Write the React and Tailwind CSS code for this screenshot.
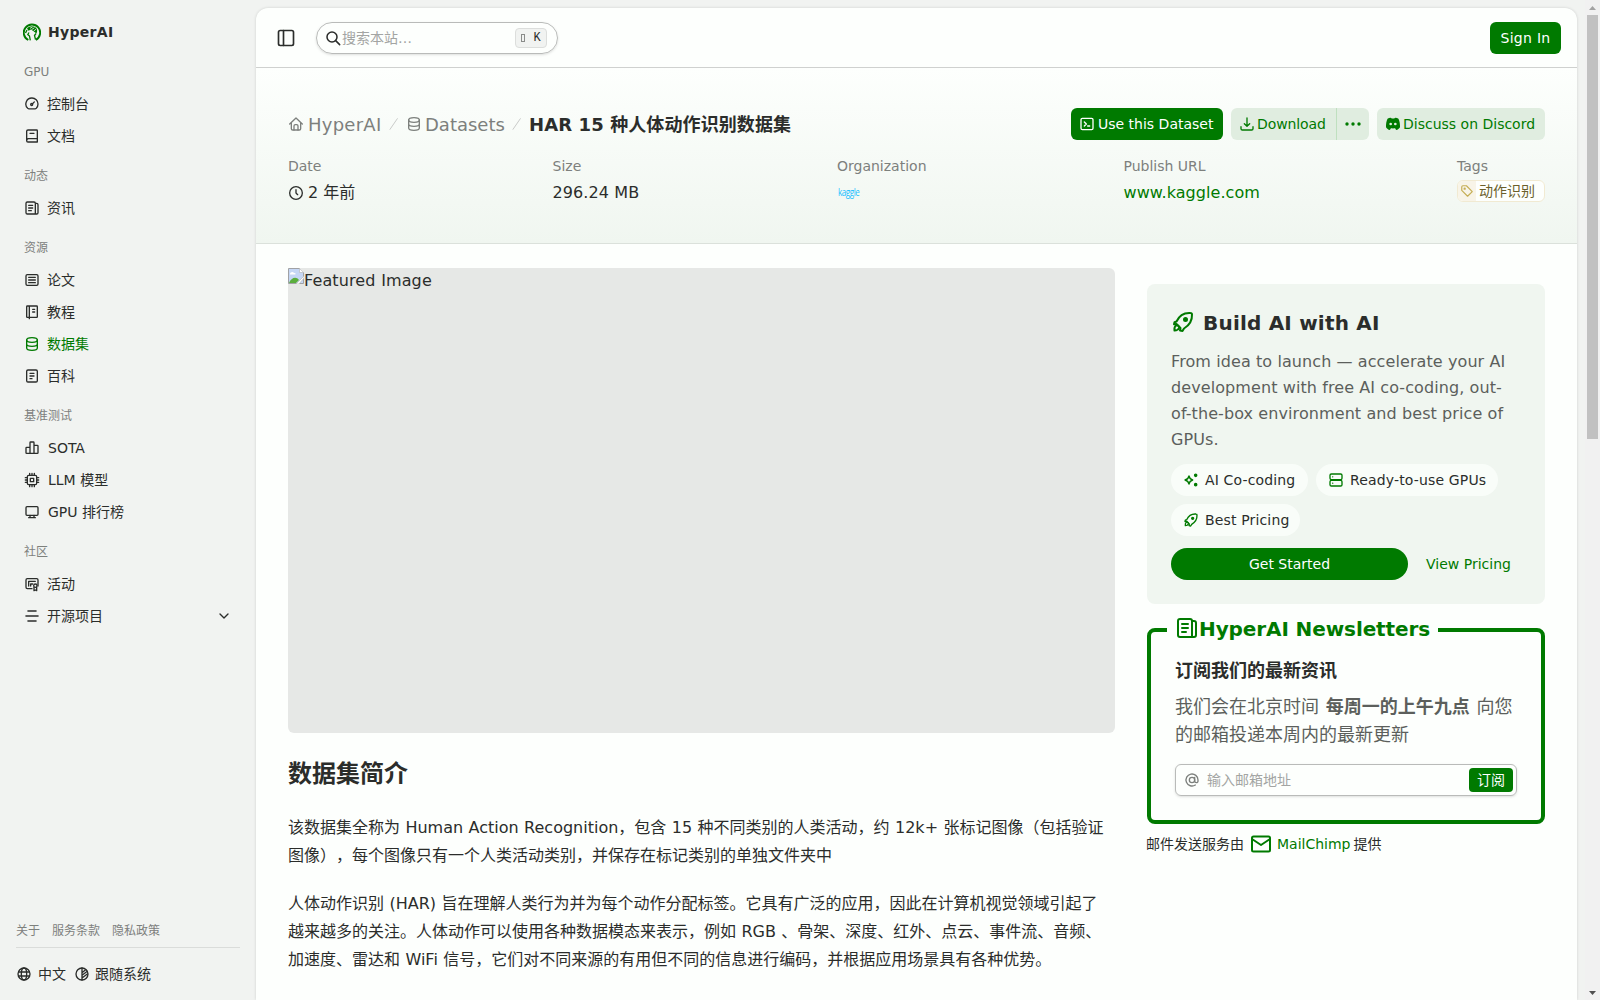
import React from "react";
import clsx from "clsx";

const Icon = ({ className = "size-4", strokeWidth = 2, children }) => (
  <svg
    viewBox="0 0 24 24"
    fill="none"
    stroke="currentColor"
    strokeWidth={strokeWidth}
    strokeLinecap="round"
    strokeLinejoin="round"
    className={clsx("shrink-0", className)}
  >
    {children}
  </svg>
);

const DashboardIcon = () => (
  <Icon>
    <path d="M12 3a9 9 0 0 1 9 9c0 2.6-1 4.900-2.600 6.500-.6.5-1 .8-1.700.8H7.300c-.7 0-1.100-.3-1.700-.8A9 9 0 0 1 12 3Z" />
    <circle cx="11.500" cy="12.800" r="1.500" />
    <path d="m12.800 11.500 2.700-2.700" />
  </Icon>
);

const BookIcon = () => (
  <Icon>
    <path d="M4 19V5a2 2 0 0 1 2-2h13a1 1 0 0 1 1 1v17H6a2 2 0 0 1-2-2Zm0 0a3 3 0 0 1 2.500-3H20M9 8h6" />
  </Icon>
);

const NewsIcon = ({ className }) => (
  <Icon className={className}>
    <path d="M17 21H5a2 2 0 0 1-2-2V5a2 2 0 0 1 2-2h10a2 2 0 0 1 2 2v16Zm0 0h2a2 2 0 0 0 2-2V7a2 2 0 0 0-2-2h-2M7 8h6M7 12h6M7 16h4" />
  </Icon>
);

const PaperIcon = () => (
  <Icon>
    <rect x="3" y="4" width="18" height="16" rx="2" />
    <path d="M7 8h10M7 12h10M7 16h10" />
  </Icon>
);

const NotebookIcon = () => (
  <Icon>
    <path d="M8 3v19M5 3h14a1 1 0 0 1 1 1v15a1 1 0 0 1-1 1H5a1 1 0 0 1-1-1V4a1 1 0 0 1 1-1ZM13 8h3M13 12h3" />
  </Icon>
);

const DatabaseIcon = () => (
  <Icon>
    <ellipse cx="12" cy="6" rx="8" ry="3.500" />
    <path d="M4 6v12c0 1.900 3.600 3.500 8 3.500s8-1.600 8-3.500V6M4 12c0 1.900 3.600 3.500 8 3.500s8-1.600 8-3.500" />
  </Icon>
);

const DocIcon = () => (
  <Icon>
    <rect x="4" y="3" width="16" height="18" rx="2" />
    <path d="M9 8h6M9 12h6M9 16h3" />
  </Icon>
);

const ChartIcon = () => (
  <Icon>
    <path d="M9 20V4a1 1 0 0 1 1-1h4a1 1 0 0 1 1 1v16M9 11H4a1 1 0 0 0-1 1v7a1 1 0 0 0 1 1h16a1 1 0 0 0 1-1V9a1 1 0 0 0-1-1h-5" />
  </Icon>
);

const ChipIcon = () => (
  <Icon>
    <rect x="5" y="5" width="14" height="14" rx="2" />
    <rect x="9.500" y="9.500" width="5" height="5" />
    <path d="M8.500 2v3M12 2v3M15.500 2v3M8.500 19v3M12 19v3M15.500 19v3M2 8.500h3M2 12h3M2 15.500h3M19 8.500h3M19 12h3M19 15.500h3" />
  </Icon>
);

const MonitorIcon = () => (
  <Icon>
    <rect x="3" y="4" width="18" height="13" rx="1.500" />
    <path d="M9 17v3.500M15 17v3.500M7 20.500h10" />
  </Icon>
);

const EventIcon = () => (
  <Icon>
    <path d="M12 19H5a2 2 0 0 1-2-2V6a2 2 0 0 1 2-2h14a2 2 0 0 1 2 2v9M7 15V8h10M10 15v-3h3" />
    <circle cx="17" cy="14.500" r="2.500" />
    <path d="M15 17v5l2-1 2 1v-5" />
  </Icon>
);

const ProjectIcon = () => (
  <Icon strokeWidth={2.4}>
    <path d="M6 4.500h12M3 12h18M6 19.500h12" />
  </Icon>
);

const RocketIcon = ({ className }) => (
  <Icon className={className}>
    <path d="M5.500 11.500C8 6 12.500 2.500 19.500 3c1 0 1.500.5 1.500 1.500.3 6.500-3 11-8 14L11.500 21l-2.500-.5.5-2.500-4-4-2.500.2.500-2 2-.7Z" />
    <path d="M3.500 20.500c-.3-2 .2-4 1.500-5 1.500-.8 3.500.8 3 2.500-.6 1.600-2.500 2.500-4.500 2.500Z" />
    <circle cx="14.500" cy="9.500" r="1.500" fill="currentColor" />
  </Icon>
);

const groups = [
  { title: "GPU", items: [["控制台", DashboardIcon], ["文档", BookIcon]] },
  { title: "动态", items: [["资讯", NewsIcon]] },
  {
    title: "资源",
    items: [
      ["论文", PaperIcon],
      ["教程", NotebookIcon],
      ["数据集", DatabaseIcon],
      ["百科", DocIcon],
    ],
  },
  {
    title: "基准测试",
    items: [
      ["SOTA", ChartIcon],
      ["LLM 模型", ChipIcon],
      ["GPU 排行榜", MonitorIcon],
    ],
  },
  { title: "社区", items: [["活动", EventIcon], ["开源项目", ProjectIcon]] },
];

const Sidebar = () => (
  <aside className="flex h-full w-64 shrink-0 flex-col">
    <div className="mt-2 flex h-12 items-center gap-[7px] pl-[23px]">
      <svg viewBox="0 0 18 18" className="size-[18px]" fill="none">
        <path
          d="M5.300 17A8.200 8.200 0 1 1 12.800 16.900"
          stroke="#007a00"
          strokeWidth="1.900"
        />
        <path
          d="M4 5.500C6 3 9.500 2.600 12 4c2.200 1.300 2.800 4 1.500 6.500L11.500 9 8 6.500 5.500 7.800Z"
          fill="#007a00"
        />
        <path
          d="M7 5.300 9.500 4M8.500 6.700l3-2M10.500 8.200l2.500-2"
          stroke="#f1f3f1"
          strokeWidth=".8"
        />
        <path
          d="M4 7 2.500 10M6 9.500 4.800 11.500l1.700 1.500.8 4.300M13 10.500l-1.500 2 1 4"
          stroke="#007a00"
          strokeWidth="1.300"
        />
      </svg>
      <span className="text-sm font-bold tracking-[0.3px]">HyperAI</span>
    </div>

    <nav className="flex flex-col gap-2">
      {groups.map((group) => (
        <div key={group.title}>
          <div className="flex h-8 items-center pl-6 text-xs text-[#7d807d]">
            {group.title}
          </div>
          {group.items.map(([name, ItemIcon]) => (
            <a
              key={name}
              className={clsx(
                "flex h-8 items-center pl-6 pr-6 text-sm",
                /^[A-Z]/.test(name) ? "gap-2" : "gap-[7px]",
                name === "数据集" && "text-[#007a00]"
              )}
            >
              <ItemIcon />
              <span className="flex-1">{name}</span>
              {name === "开源项目" && (
                <Icon>
                  <path d="m6 9 6 6 6-6" />
                </Icon>
              )}
            </a>
          ))}
        </div>
      ))}
    </nav>

    <div className="mx-4 mt-auto">
      <div className="flex gap-3 pb-2 text-xs leading-4 text-[#7d807d]">
        <a>关于</a>
        <a>服务条款</a>
        <a>隐私政策</a>
      </div>
      <div className="flex h-[53px] items-center border-t border-[#dadcda] text-sm">
        <Icon>
          <circle cx="12" cy="12" r="9" />
          <ellipse cx="12" cy="12" rx="4" ry="9" />
          <path d="M4 9h16M4 15h16" />
        </Icon>
        <span className="ml-1.5">中文</span>
        <Icon className="ml-2 size-4">
          <circle cx="12" cy="12" r="9" />
          <path d="M12 3v18M12 10l5-4M12 14l8-6M12 18l8-6" />
        </Icon>
        <span className="ml-[5px]">跟随系统</span>
      </div>
    </div>
  </aside>
);

const TopBar = () => (
  <header className="flex h-[60px] shrink-0 items-center border-b border-[#cfd1cf] pl-5 pr-4">
    <Icon className="size-5">
      <rect x="3" y="3" width="18" height="18" rx="2" />
      <path d="M9 3v18" />
    </Icon>
    <div className="ml-5 flex h-8 w-[242px] items-center rounded-full border border-[#b9bbb9] pl-2 pr-2.5 shadow-sm">
      <Icon strokeWidth={2.3}>
        <circle cx="10.500" cy="10.500" r="7.500" />
        <path d="m16 16 6 6" />
      </Icon>
      <span className="ml-px flex-1 text-sm text-[#a3a5a3]">搜索本站…</span>
      <kbd className="flex h-5 w-8 items-center justify-center gap-2 rounded border border-[#dcdedc] bg-[#f1f3f1] font-['Liberation_Mono'] text-xs">
        <span className="h-2 w-1 border border-[#8a8c8a]"></span>K
      </kbd>
    </div>
    <button className="ml-auto h-8 w-[71px] rounded-md bg-[#007a00] text-sm tracking-[0.3px] text-white">
      Sign In
    </button>
  </header>
);

const Meta = ({ label, className, children }) => (
  <div className={className}>
    <div className="h-5 text-sm leading-5 text-[#7d807d]">{label}</div>
    <div className="mt-[5px] flex h-6 items-center whitespace-nowrap">
      {children}
    </div>
  </div>
);

const Hero = () => (
  <section className="h-44 shrink-0 border-b border-[#dbe1db] bg-linear-to-b from-[#fdfffd] to-[#f0f6f0] px-8 pt-10">
    <div className="flex h-8 items-center">
      <div className="flex items-center text-lg text-[#7d807d]">
        <Icon>
          <path d="M2.500 12 12 3l9.500 9M5 10v9a2 2 0 0 0 2 2h10a2 2 0 0 0 2-2v-9" />
          <path d="M9 21v-6a2 2 0 0 1 2-2h2a2 2 0 0 1 2 2v6" />
        </Icon>
        <span className="ml-1 w-[74px] pt-0.5 tracking-[0.25px]">HyperAI</span>
        <Icon className="ml-1 size-4 text-[#c9cbc9]" strokeWidth={1.5}>
          <path d="M17 4 6 20" />
        </Icon>
        <span className="ml-1 flex w-[103px] items-center gap-[3px]">
          <DatabaseIcon />
          <span className="pt-0.5">Datasets</span>
        </span>
        <Icon className="size-4 text-[#c9cbc9]" strokeWidth={1.5}>
          <path d="M17 4 6 20" />
        </Icon>
      </div>
      <h1 className="ml-1 whitespace-nowrap pt-0.5 text-lg font-bold tracking-[0.1px]">
        HAR 15 种人体动作识别数据集
      </h1>

      <div className="ml-auto flex gap-2 text-sm">
        <button className="flex h-8 w-[152px] items-center gap-[3px] whitespace-nowrap rounded-md bg-[#007a00] pl-2 text-white">
          <Icon>
            <rect x="3" y="3.500" width="18" height="17" rx="2" />
            <path d="m8 9 3 3-3 3M13 15h3" />
          </Icon>
          Use this Dataset
        </button>
        <div className="flex h-8 w-[138px] rounded-md bg-[#e0ede0] text-[#007a00]">
          <button className="flex w-[106px] items-center gap-0.5 border-r border-[#bfe0bf] pl-2 tracking-[-0.1px]">
            <Icon>
              <path d="M12 3v12M8 11.500l4 4 4-4M3 16v3a2 2 0 0 0 2 2h14a2 2 0 0 0 2-2v-3" />
            </Icon>
            Download
          </button>
          <button className="flex flex-1 items-center justify-center">
            <svg viewBox="0 0 16 4" className="w-4" fill="currentColor">
              <circle cx="2" cy="2" r="1.700" />
              <circle cx="8" cy="2" r="1.700" />
              <circle cx="14" cy="2" r="1.700" />
            </svg>
          </button>
        </div>
        <button className="flex h-8 w-[168px] items-center gap-0.5 whitespace-nowrap rounded-md bg-[#e0ede0] pl-2 text-[#007a00]">
          <svg viewBox="0 0 24 24" className="size-4" fill="currentColor">
            <path
              fillRule="evenodd"
              d="M8.500 2.500c.7 0 1.200.4 1.500 1.200a15 15 0 0 1 4 0c.3-.8.800-1.200 1.500-1.200 1.700.2 3.500.7 4.700 1.700 1.600 2.700 2.500 8.500 2.300 12.500-1.400 2-3.400 3.700-5.500 4.300-.8-.5-1.400-1.700-1.800-2.600-1.800.3-4.600.3-6.400 0-.4.900-1 2.100-1.800 2.600-2.100-.6-4.100-2.300-5.500-4.300-.2-4 .7-9.800 2.300-12.500 1.200-1 3-1.500 4.700-1.700ZM8.500 10a2 2 0 1 0 0 4 2 2 0 0 0 0-4Zm7 0a2 2 0 1 0 0 4 2 2 0 0 0 0-4Z"
            />
          </svg>
          Discuss on Discord
        </button>
      </div>
    </div>

    <div className="mt-4 flex justify-between">
      <Meta label="Date" className="w-[68px]">
        <Icon className="mr-1 size-4">
          <circle cx="12" cy="12" r="9.500" />
          <path d="M12 7v5l2.500 2.500" />
        </Icon>
        2 年前
      </Meta>
      <Meta label="Size" className="w-[88px]">
        <span className="tracking-[0.1px]">296.24 MB</span>
      </Meta>
      <Meta label="Organization" className="w-[90px]">
        <span className="-mt-0.5 scale-y-125 pl-px font-['Open_Sans'] text-[8px] tracking-[-0.4px] text-[#20beff]">
          kaggle
        </span>
      </Meta>
      <Meta label="Publish URL" className="w-[137px]">
        <a className="tracking-[0.07px] text-[#007a00]">www.kaggle.com</a>
      </Meta>
      <Meta label="Tags" className="w-[88px]">
        <span className="-mt-1 flex h-[22px] w-[88px] overflow-hidden rounded-md border border-[#f1ead2] bg-[#fdfffd] text-sm leading-5 text-[#6b5f2b]">
          <span className="flex w-[18px] items-center justify-center bg-[#f8f4e8] text-[#c5ae55]">
            <Icon className="size-3.5">
              <path d="M3 5v6l10 10 8-8L11 3H5a2 2 0 0 0-2 2Z" />
              <circle cx="8" cy="8" r="1" />
            </Icon>
          </span>
          <span className="ml-[3px]">动作识别</span>
        </span>
      </Meta>
    </div>
  </section>
);

const Article = () => (
  <article className="w-[827px] [text-spacing-trim:space-all] [word-spacing:0.35px]">
    <div className="flex h-[465px] items-start rounded-md bg-[#e6e8e6]">
      <svg viewBox="0 0 16 16" className="size-4 shrink-0">
        <path d="M.5.500h11l4 4v11H.5Z" fill="#c5d7f5" stroke="#a0a2a5" />
        <path d="M2 6c0-2 3-3 4-1 2-.5 2 1.500 1 1.500H2Z" fill="#fff" />
        <path d="M1 15c2-5 7-7 10-3l-3 3Z" fill="#5aae3c" />
        <path d="M11.500.500v4h4M8 16l8-8v2l-5 6Z" fill="#fff" stroke="#b8babc" strokeWidth=".7" />
      </svg>
      <span className="pt-px leading-6 tracking-[0.12px]">Featured Image</span>
    </div>
    <h2 className="mt-[25px] text-2xl font-bold">数据集简介</h2>
    <p className="mt-6 whitespace-nowrap leading-7">
      该数据集全称为 Human Action Recognition，包含 15 种不同类别的人类活动，约 12k+ 张标记图像（包括验证
      <br />
      图像），每个图像只有一个人类活动类别，并保存在标记类别的单独文件夹中
    </p>
    <p className="mt-5 whitespace-nowrap leading-7">
      人体动作识别 (HAR) 旨在理解人类行为并为每个动作分配标签。它具有广泛的应用，因此在计算机视觉领域引起了
      <br />
      越来越多的关注。人体动作可以使用各种数据模态来表示，例如 RGB 、骨架、深度、红外、点云、事件流、音频、
      <br />
      加速度、雷达和 WiFi 信号，它们对不同来源的有用但不同的信息进行编码，并根据应用场景具有各种优势。
    </p>
  </article>
);

const Feature = ({ className, children }) => (
  <span
    className={clsx(
      "flex h-8 items-center gap-1.5 whitespace-nowrap rounded-full bg-[#f9fdf9] pl-3 text-sm tracking-[0.15px]",
      className
    )}
  >
    {children}
  </span>
);

const BuildCard = () => (
  <div className="h-80 rounded-lg bg-[#f0f6f0] p-6 pt-[25px]">
    <h3 className="flex h-7 items-center gap-2 text-xl font-bold tracking-[0.2px]">
      <RocketIcon className="-mt-0.5 size-6 text-[#007a00]" />
      Build AI with AI
    </h3>
    <p className="mt-3 whitespace-nowrap leading-[26px] tracking-[0.09px] text-[#5c5f5c]">
      From idea to launch — accelerate your AI
      <br />
      development with free AI co-coding, out-
      <br />
      of-the-box environment and best price of
      <br />
      GPUs.
    </p>
    <div className="mt-[11px] flex flex-wrap gap-2">
      <Feature className="w-[137px]">
        <Icon className="size-4 text-[#007a00]">
          <path d="M9 6c.8 4 2 5 5.500 6-3.500 1-4.700 2-5.500 6-.8-4-2-5-6-6 4-1 5.200-2 6-6Z" />
          <circle cx="19" cy="5" r="1.700" fill="currentColor" />
          <circle cx="19" cy="19" r="1.700" fill="currentColor" />
        </Icon>
        AI Co-coding
      </Feature>
      <Feature className="w-[182px]">
        <Icon className="size-4 text-[#007a00]">
          <rect x="3" y="3" width="18" height="8.500" rx="2" />
          <rect x="3" y="12.500" width="18" height="8.500" rx="2" />
          <path d="M7 7.300h.1M7 16.700h.1" />
        </Icon>
        Ready-to-use GPUs
      </Feature>
      <Feature className="w-[129px]">
        <RocketIcon className="size-4 text-[#007a00]" />
        Best Pricing
      </Feature>
    </div>
    <div className="mt-3 flex gap-2 text-sm">
      <button className="h-8 w-[237px] rounded-full bg-[#007a00] text-white">
        Get Started
      </button>
      <button className="h-8 flex-1 text-[#007a00]">View Pricing</button>
    </div>
  </div>
);

const Newsletter = () => (
  <>
    <fieldset className="mt-3 rounded-lg border-4 border-[#007a00] px-6 pb-6">
      <legend className="-ml-2 flex h-7 w-[271px] items-center whitespace-nowrap px-2 pb-0.5 text-xl font-bold tracking-[-0.1px] text-[#007a00]">
        <NewsIcon className="-mt-0.5 size-6" />
        HyperAI Newsletters
      </legend>
      <h4 className="mt-[13px] text-lg font-bold leading-7">
        订阅我们的最新资讯
      </h4>
      <p className="mt-2 whitespace-nowrap text-lg leading-7 text-[#5c5f5c] [word-spacing:1px]">
        我们会在北京时间 <b>每周一的上午九点</b> 向您
        <br />
        的邮箱投递本周内的最新更新
      </p>
      <div className="mt-[15px] flex h-8 items-center rounded-md border border-[#b9bbb9] pl-2 pr-[3px] text-sm shadow-sm">
        <Icon className="size-4 text-[#7d807d]">
          <circle cx="12" cy="12" r="4" />
          <path d="M16 8v5.500a2.500 2.500 0 0 0 5 0V12a9 9 0 1 0-4 7.500" />
        </Icon>
        <span className="ml-[7px] flex-1 text-[#a3a5a3]">输入邮箱地址</span>
        <button className="h-6 w-11 rounded bg-[#007a00] text-white">订阅</button>
      </div>
    </fieldset>
    <p className="-ml-px mt-2 flex h-6 items-center whitespace-nowrap text-sm">
      邮件发送服务由
      <Icon className="ml-[5px] mr-1 size-6 text-[#007a00]">
        <rect x="3" y="4.500" width="18" height="15" rx="1.500" />
        <path d="m3 7 9 6 9-6" />
      </Icon>
      <a className="mr-[3px] text-[#007a00]">MailChimp</a>提供
    </p>
  </>
);

const Scrollbar = () => (
  <div className="ml-2 flex w-[15px] shrink-0 flex-col items-center bg-[#f1f1f1]">
    <svg viewBox="0 0 15 15" className="size-[15px]" fill="#a3a3a3">
      <path d="M4 10h7L7.500 6Z" />
    </svg>
    <div className="h-[424px] w-[11px] bg-[#c1c1c1]"></div>
    <svg viewBox="0 0 15 15" className="mt-auto size-[15px]" fill="#505050">
      <path d="M4 6h7l-3.500 4Z" />
    </svg>
  </div>
);

const App = () => {
  return (
    <div className="flex h-screen overflow-hidden bg-[#f1f3f1] font-['DejaVu_Sans','Noto_Sans_CJK_SC',sans-serif] text-[#2b2d2b]">
      <Sidebar />
      <main className="mt-2 flex min-w-0 flex-1 flex-col overflow-hidden rounded-t-xl bg-[#fdfffd] shadow-[0_0_3px_rgba(0,0,0,0.15)]">
        <TopBar />
        <Hero />
        <div className="flex gap-8 px-8 pt-6">
          <Article />
          <div className="mt-4 w-[398px]">
            <BuildCard />
            <Newsletter />
          </div>
        </div>
      </main>
      <Scrollbar />
    </div>
  );
};

export default App;
